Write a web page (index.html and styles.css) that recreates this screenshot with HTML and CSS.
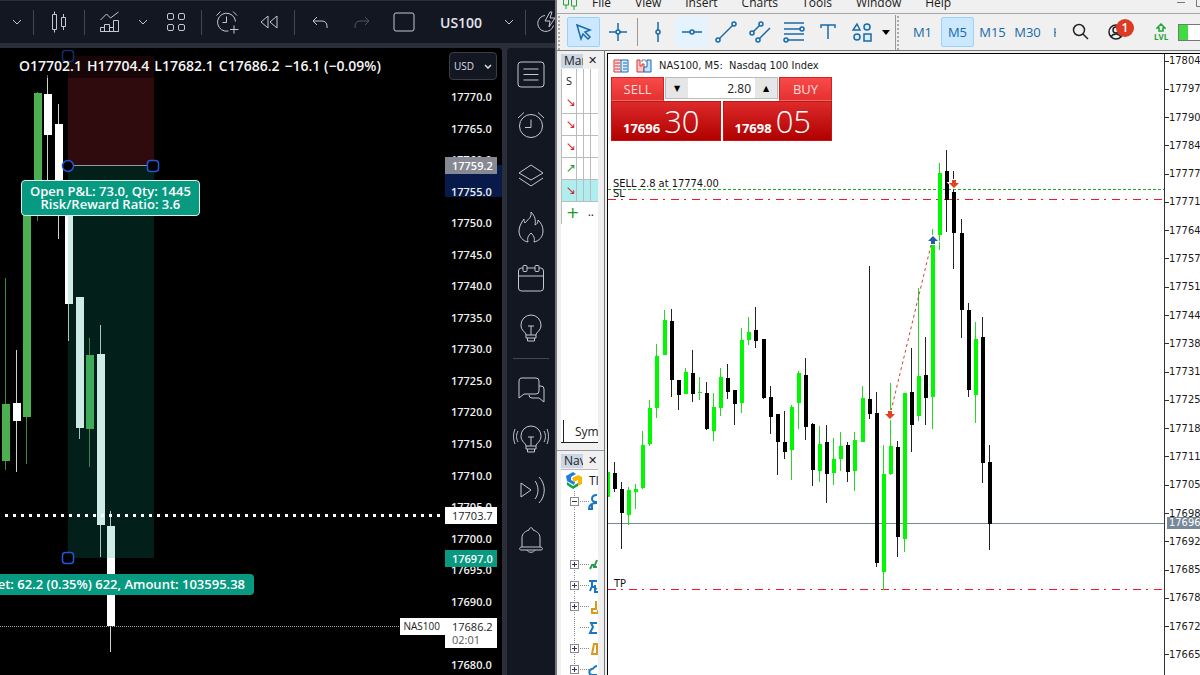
FILE: index.html
```html
<!DOCTYPE html>
<html lang="en">
<head>
  <meta charset="UTF-8">
  <meta name="viewport" content="width=device-width, initial-scale=1.0">
  <title>US100 / NAS100 - Trading desktop</title>
  <link rel="stylesheet" href="styles.css">
</head>
<body>
  <!-- Left: web chart -->
  <section class="tv">
    <header class="tv-toolbar">
      <button class="tv-chev" aria-label="Interval"><svg width="10" height="6" viewBox="0 0 10 6"><path d="M1 1l4 4 4-4"/></svg></button>
      <span class="tv-sep"></span>
      <button class="tv-tool" aria-label="Chart type"><svg width="18" height="24" viewBox="0 0 18 24"><path d="M2.500 4.500h4v15h-4zM4.500 1.500v3M4.500 19.500v3M11.500 7.500h4v9h-4zM13.500 4v3.500M13.500 16.500v3.500"/></svg></button>
      <span class="tv-sep"></span>
      <button class="tv-tool" aria-label="Indicators"><svg width="22" height="22" viewBox="0 0 22 22"><path d="M1.500 9l6-6 4 4 8-6M1.500 20.500v-4h4v4zM5.500 20.500v-7h5v7M10.500 20.500v-4h4v4M14.500 20.500v-11h5v11zM1.500 20.500h18"/></svg></button>
      <button class="tv-chev" aria-label="Favorite indicators"><svg width="10" height="6" viewBox="0 0 10 6"><path d="M1 1l4 4 4-4"/></svg></button>
      <button class="tv-tool" aria-label="Templates"><svg width="20" height="20" viewBox="0 0 20 20"><rect x="1.500" y="1.500" width="6" height="6" rx="1.500"/><rect x="12.500" y="1.500" width="6" height="6" rx="1.500"/><rect x="1.500" y="12.500" width="6" height="6" rx="1.500"/><rect x="12.500" y="12.500" width="6" height="6" rx="1.500"/></svg></button>
      <span class="tv-sep"></span>
      <button class="tv-tool" aria-label="Alert"><svg width="24" height="24" viewBox="0 0 24 24"><path d="M20.500 11.500a9 9 0 1 0-7 9.500M11.500 6.500v6h-4M1.500 5.500l4-4M18 1.500l4 4M19 15.500v8M15 19.500h8.500"/></svg></button>
      <button class="tv-tool" aria-label="Replay"><svg width="18" height="14" viewBox="0 0 18 14"><path d="M8 1v12L1 7zM17 1v12L10 7z"/></svg></button>
      <span class="tv-sep"></span>
      <button class="tv-tool" aria-label="Undo"><svg width="16" height="13" viewBox="0 0 16 13"><path d="M5 1L1 5l4 4M1 5h9c3 0 5 2 5 5v2"/></svg></button>
      <button class="tv-tool tv-dim" aria-label="Redo"><svg width="16" height="13" viewBox="0 0 16 13"><path d="M11 1l4 4-4 4M15 5H6c-3 0-5 2-5 5v2"/></svg></button>
      <button class="tv-tool" aria-label="Layout"><svg width="22" height="20" viewBox="0 0 22 20"><rect x="1" y="1" width="20" height="18" rx="2"/></svg></button>
      <button class="tv-name">US100</button>
      <button class="tv-chev" aria-label="Manage layouts"><svg width="10" height="6" viewBox="0 0 10 6"><path d="M1 1l4 4 4-4"/></svg></button>
      <span class="tv-sep"></span>
      <button class="tv-tool tv-flash" aria-label="Quick search"><svg width="24" height="22" viewBox="0 0 24 22"><path d="M9 4.500a8 8 0 1 0 8.500 10M14 1l-5 9h5l-1 6 6-9h-5l2-6z"/></svg></button>
    </header>

    <div class="tv-body">
      <main class="tv-chart">
        <div class="tv-plot">
          <svg class="canvas" id="tvCanvas" aria-hidden="true"></svg>
          <div class="tv-legend">
            <span>O17702.1</span><span>H17704.4</span><span>L17682.1</span><span>C17686.2</span><span>−16.1 (−0.09%)</span>
          </div>
          <div class="position-label">Open P&amp;L: 73.0, Qty: 1445<br>Risk/Reward Ratio: 3.6</div>
          <div class="target-label">Target: 62.2 (0.35%) 622, Amount: 103595.38</div>
        </div>
        <aside class="tv-axis">
          <select class="currency" aria-label="Currency"><option>USD</option></select>
          <div class="axis-range"></div>
          <ul class="tv-prices" id="tvPrices"></ul>
          <span class="tag tag-entry">17759.2</span>
          <span class="tag tag-line">17703.7</span>
          <span class="tag tag-target">17697.0</span>
          <span class="tag-symbol">NAS100</span>
          <span class="tag tag-last">17686.2<small>02:01</small></span>
        </aside>
      </main>

      <nav class="tv-rail">
        <div class="rail-top">
          <button aria-label="Watchlist"><svg width="28" height="28" viewBox="0 0 28 28"><rect x="1" y="2" width="26" height="25" rx="3"/><path d="M6.500 9h15M6.500 14.500h15M6.500 20h15"/></svg></button>
          <button aria-label="Alerts"><svg width="28" height="28" viewBox="0 0 28 28"><circle cx="14" cy="15" r="11.500"/><path d="M14 8.500V16.500H8M1 7l6-5.500M21 1.500L27 7"/></svg></button>
          <button aria-label="Object tree"><svg width="28" height="28" viewBox="0 0 28 28"><path d="M14 3l12 8-12 7-12-7zM2 16l12 8 12-8"/></svg></button>
          <button aria-label="Hotlists"><svg width="28" height="32" viewBox="0 0 28 32"><path d="M14 1c1 6-4 8-6 11-1-2-1-3-1-4-3 4-5 8-5 12 0 6 4 10 9 11-1-4 0-6 3-9 3 3 4 5 3 9 5-1 9-5 9-11 0-5-2-8-5-11 0 3-1 4-3 5 1-5 0-9-4-13z"/></svg></button>
          <button aria-label="Calendar"><svg width="28" height="28" viewBox="0 0 28 28"><rect x="1.500" y="4" width="25" height="23" rx="3"/><path d="M1.500 12h25"/><rect class="cut" x="6" y="1.500" width="4" height="6" rx="1"/><rect class="cut" x="18" y="1.500" width="4" height="6" rx="1"/></svg></button>
          <button aria-label="Ideas"><svg width="28" height="30" viewBox="0 0 28 30"><path d="M9 21c0-3-5-4-5-10a10 10 0 0 1 20 0c0 6-5 7-5 10zM9 21v3h10v-3M10.500 24v3h7v-3M11 12h6M14 12v9"/></svg></button>
        </div>
        <hr>
        <div class="rail-bottom">
          <button aria-label="Chats"><svg width="28" height="28" viewBox="0 0 28 28"><path d="M4 2h15a3 3 0 0 1 3 3v10a3 3 0 0 1-3 3H7l-5 4V5a3 3 0 0 1 2-3zM22 10h2a3 3 0 0 1 3 3v13l-5-4h-7a3 3 0 0 1-3-3"/></svg></button>
          <button aria-label="Ideas stream"><svg width="36" height="30" viewBox="0 0 36 30"><path d="M13 21c0-3-5-4-5-10a10 10 0 0 1 20 0c0 6-5 7-5 10zM13 21v3h10v-3M14.500 24v3h7v-3M15 12h6M18 12v9M5 6c-2 4-2 7 0 11M2 4c-2 5-2 10 0 15M31 6c2 4 2 7 0 11M34 4c2 5 2 10 0 15"/></svg></button>
          <button aria-label="Streams"><svg width="30" height="28" viewBox="0 0 30 28"><path d="M5 7v14l10-7zM19 5c4 5 4 13 0 18M23 1c7 7 7 19 0 26"/></svg></button>
          <button aria-label="Notifications"><svg width="28" height="28" viewBox="0 0 28 28"><path d="M5 21v-9c0-5 4-7 7-8 0-3 4-3 4 0 3 1 7 3 7 8v9M5 21h18c3 0 3 3 1 3H4c-2 0-2-3 1-3zM10 24c1 3 7 3 8 0"/></svg></button>
        </div>
      </nav>
    </div>
  </section>

  <!-- Right: desktop terminal -->
  <section class="mt">
    <nav class="mt-menu">
      <svg class="mt-logo" width="16" height="10" viewBox="0 0 16 10"><path d="M1.500 0v5h5V0M4 5v4M9.500 0v6h5V0M12 6v4"/></svg>
      <a href="#">File</a><a href="#">View</a><a href="#">Insert</a><a href="#">Charts</a><a href="#">Tools</a><a href="#">Window</a><a href="#">Help</a>
      <svg class="mt-window" width="24" height="8" viewBox="0 0 24 8"><path d="M1 2.500h8M20.500 0v6.500H26"/></svg>
    </nav>

    <div class="mt-toolbar">
      <span class="grip"></span>
      <div class="mt-tools">
        <button class="active" aria-label="Cursor"><svg width="20" height="20" viewBox="0 0 20 20"><path d="M3 3l13 5-5 2 5 5-2 2-5-5-2 5z"/></svg></button>
        <button aria-label="Crosshair"><svg width="20" height="20" viewBox="0 0 20 20"><path d="M10 1v7M10 12v7M1 10h7M12 10h7"/><circle cx="10" cy="10" r="2"/></svg></button>
        <span class="mt-sep"></span>
        <button aria-label="Vertical line"><svg width="20" height="20" viewBox="0 0 20 20"><path d="M10 0v8M10 12v8"/><circle cx="10" cy="10" r="2"/></svg></button>
        <button class="hover" aria-label="Horizontal line"><svg width="20" height="20" viewBox="0 0 20 20"><path d="M0 10h8M12 10h8"/><circle cx="10" cy="10" r="2"/></svg></button>
        <button aria-label="Trendline"><svg width="22" height="22" viewBox="0 0 22 22"><path d="M4 18L18 4"/><circle cx="3" cy="19" r="2"/><circle cx="19" cy="3" r="2"/></svg></button>
        <button aria-label="Channel"><svg width="22" height="22" viewBox="0 0 22 22"><path d="M4 11l7-7M9 19L21 7"/><circle cx="3" cy="12" r="2"/><circle cx="12" cy="3" r="2"/><circle cx="9" cy="19" r="2"/></svg></button>
        <button aria-label="Fibonacci"><svg width="22" height="22" viewBox="0 0 22 22"><path d="M1 2h20M1 8h16M1 13h20M5 19h16"/><circle cx="19" cy="8" r="2"/><circle cx="3" cy="19" r="2"/></svg></button>
        <button aria-label="Text"><svg width="18" height="18" viewBox="0 0 18 18"><path d="M2 5V2h14v3M9 2v14"/></svg></button>
        <button aria-label="Shapes"><svg width="20" height="20" viewBox="0 0 20 20"><path d="M5 2l3 6H1z"/><circle cx="15" cy="5" r="3"/><circle cx="5" cy="15" r="3"/><rect x="12" y="12" width="7" height="7"/></svg></button>
        <button class="narrow" aria-label="More shapes"><svg width="8" height="5" viewBox="0 0 8 5"><path class="solid" d="M0 0h8L4 5z"/></svg></button>
      </div>
      <span class="grip grip-line"></span>
      <div class="mt-periods">
        <button>M1</button><button class="active">M5</button><button>M15</button><button>M30</button><button class="cropped">H1</button>
      </div>
      <div class="mt-right">
        <button aria-label="Search"><svg width="18" height="18" viewBox="0 0 18 18"><circle cx="7" cy="7" r="5.500"/><path d="M11 11l5 5"/></svg></button>
        <button class="account" aria-label="Account"><svg width="16" height="16" viewBox="0 0 16 16"><circle cx="8" cy="8" r="7"/><circle cx="8" cy="6" r="3"/><path d="M3 13c2-4 8-4 10 0"/></svg><span class="badge">1</span></button>
        <button class="level" aria-label="LVL"><svg width="10" height="9" viewBox="0 0 10 9"><path d="M5 1l4 4H7v3H3V5H1z"/></svg><span>LVL</span></button>
        <span class="battery"></span>
      </div>
    </div>

    <div class="mt-body">
      <aside class="dock">
        <section class="watch">
          <h2><span>Market Watch</span><button aria-label="Close Market Watch">✕</button></h2>
          <table>
            <thead><tr><th>S</th><th></th><th></th><th></th></tr></thead>
            <tbody>
              <tr><td class="down">↘</td><td></td><td></td><td></td></tr>
              <tr><td class="down">↘</td><td></td><td></td><td></td></tr>
              <tr><td class="down">↘</td><td></td><td></td><td></td></tr>
              <tr><td class="up">↗</td><td></td><td></td><td></td></tr>
              <tr class="selected"><td class="down">↘</td><td></td><td></td><td></td></tr>
            </tbody>
          </table>
          <div class="add-row"><button aria-label="Add symbol">+</button><span>..</span></div>
          <div class="watch-tab">Symbols</div>
        </section>
        <section class="navigator">
          <h2><span>Navigator</span><button aria-label="Close Navigator">✕</button></h2>
          <ul class="tree">
            <li class="root"><svg width="16" height="17" viewBox="0 0 16 17"><path fill="#1a7fe0" d="M0 4l7-4 3 2-5 3v3l4 2-1 3-7-4z"/><path fill="#f6b800" d="M6 6l6-3 4 2v7l-4 2V8l-4 2z"/><path fill="#12a34a" d="M1 10l6 4 5-3v3l-5 3-6-4z"/></svg><span>TI</span></li>
            <li><i class="box minus"></i><svg width="10" height="16" viewBox="0 0 10 16"><path d="M9 1C5 1 4 3 4 5s2 3 5 3M9 9c-6 0-8 3-8 6h3v-4"/></svg></li>
            <li class="empty"></li>
            <li class="empty"></li>
            <li><i class="box"></i><svg class="green" width="10" height="16" viewBox="0 0 10 16"><path d="M2 12l2-4h3l2-5M5 10h4"/></svg></li>
            <li><i class="box"></i><svg width="10" height="16" viewBox="0 0 10 16"><path d="M1 3h8M4 3v5l-2 5M7 7v7h3M4 8l5 3"/></svg></li>
            <li><i class="box"></i><svg class="gold" width="10" height="16" viewBox="0 0 10 16"><path d="M8 2v8H4v4h6v-3"/></svg></li>
            <li><i class="stub"></i><svg width="10" height="16" viewBox="0 0 10 16"><path d="M9 3H3l2 4-3 6h7"/></svg></li>
            <li><i class="box"></i><svg class="gold" width="10" height="16" viewBox="0 0 10 16"><path d="M9 3H6L4 13h5z"/></svg></li>
            <li><i class="box"></i><svg width="10" height="16" viewBox="0 0 10 16"><path d="M9 4C6 4 6 7 4 7c-4 1-3 6 0 6h5"/></svg></li>
          </ul>
        </section>
      </aside>

      <main class="mt-chart">
        <div class="mt-plot">
          <svg class="canvas" id="mtCanvas" aria-hidden="true"></svg>
          <div class="mt-title">
            <svg width="16" height="14" viewBox="0 0 16 14"><path fill="#fbe3e3" stroke="#d8322f" d="M8 1H1v12h7M2 4h5M2 7h5M2 10h5"/><path fill="#dceeff" stroke="#1667b7" d="M8 1h7v12H8zM10 4h4M10 7h4M10 10h4"/></svg>
            <svg width="16" height="14" viewBox="0 0 16 14"><path fill="#f9c9c9" stroke="#d8322f" d="M1 1h3v6h2V5h2v8H1z"/><path fill="#c9e4ff" stroke="#1667b7" d="M8 13V8h3V1h4v12z"/><path fill="none" stroke="#888" d="M6 3V1h4v2"/></svg>
            <span>NAS100, M5:&nbsp; Nasdaq 100 Index</span>
          </div>
          <form class="one-click">
            <div class="deal-row">
              <button type="button" class="deal">SELL</button>
              <div class="volume">
                <button type="button" aria-label="Volume down">▼</button>
                <input type="text" value="2.80" aria-label="Volume">
                <button type="button" aria-label="Volume up">▲</button>
              </div>
              <button type="button" class="deal">BUY</button>
            </div>
            <div class="price-row">
              <button type="button"><b>17696</b><span>30</span></button>
              <button type="button"><b>17698</b><span>05</span></button>
            </div>
          </form>
        </div>
        <aside class="mt-axis">
          <ul id="mtPrices"></ul>
          <span class="mt-bid">17696</span>
        </aside>
      </main>
    </div>
  </section>

  <script src="chart.js"></script>
</body>
</html>
```
FILE: styles.css
```css
* {
  box-sizing: border-box;
}

body {
  margin: 0;
  height: 100vh;
  display: flex;
  overflow: hidden;
  background: #f0f0f0;
  font-family: "Open Sans", "Noto Sans", sans-serif;
}

button {
  border: none;
  background: none;
  padding: 0;
  margin: 0;
  color: inherit;
  font: inherit;
  cursor: pointer;
}

ul {
  list-style: none;
  margin: 0;
  padding: 0;
}

svg {
  display: block;
  flex: none;
}

.canvas {
  position: absolute;
  inset: 0;
  width: 100%;
  height: 100%;
}

/* ---------- left: web chart ---------- */
.tv {
  flex: 0 0 557px;
  min-width: 0;
  display: flex;
  flex-direction: column;
  background: #2a2e39;
  border-right: 2px solid #77787c;
  overflow: hidden;
}

.tv svg {
  fill: none;
  stroke: #c5c8d0;
}

.tv-toolbar {
  height: 43px;
  flex: none;
  display: flex;
  align-items: center;
  gap: 2px;
  padding-left: 6px;
  border-top: 1px solid #2a2e39;
  background: #131722;
  overflow: hidden;
}

.tv-toolbar button {
  flex: none;
  height: 36px;
  display: flex;
  align-items: center;
  justify-content: center;
}

.tv-toolbar .tv-tool {
  width: 40px;
}

.tv-toolbar .tv-flash {
  width: 34px;
}

.tv-toolbar .tv-chev {
  width: 22px;
}

.tv-toolbar .tv-name {
  padding: 0 14px;
  color: #e4e6ec;
  font-size: 14px;
  font-weight: 600;
}

.tv-dim {
  opacity: 0.35;
}

.tv-sep {
  flex: none;
  width: 1px;
  height: 25px;
  margin: 0 3px;
  background: #434651;
}

.tv-body {
  flex: 1;
  min-height: 0;
  display: flex;
  gap: 5px;
  padding-top: 5px;
}

.tv-chart {
  flex: 1;
  min-width: 0;
  display: flex;
  background: #000;
  border-top-right-radius: 4px;
}

.tv-plot {
  position: relative;
  flex: 1;
  min-width: 0;
  overflow: hidden;
}

.tv-legend {
  position: relative;
  display: flex;
  gap: 5px;
  padding: 8px 0 3px 19px;
  color: #f5f5f5;
  background: rgba(0, 0, 0, 0.5);
  font-size: 14px;
  font-weight: 600;
  line-height: 19px;
  white-space: nowrap;
}

.position-label,
.target-label {
  position: absolute;
  background: #089981;
  color: #fff;
  font-size: 13px;
  font-weight: 600;
  text-align: center;
  white-space: nowrap;
  border-radius: 4px;
}

.position-label {
  left: 21px;
  top: 132px;
  padding: 4px 8px;
  border: 1px solid #d6efe9;
  line-height: 13px;
}

.target-label {
  right: 190px;
  top: 526px;
  padding: 0 9px;
  line-height: 21px;
}

.tv-axis {
  position: relative;
  flex: none;
  width: 58px;
  display: flex;
  flex-direction: column;
  color: #f0f0f0;
  font-size: 11px;
  font-weight: 600;
}

.currency {
  width: 48px;
  height: 28px;
  margin: 4px 0 9px 5px;
  padding: 0 4px;
  appearance: none;
  border: 1px solid #3a3d48;
  border-radius: 4px;
  background: #131722 url("data:image/svg+xml,%3Csvg xmlns='http://www.w3.org/2000/svg' width='8' height='5'%3E%3Cpath d='M1 1l3 3 3-3' fill='none' stroke='%23ddd' stroke-width='1.500'/%3E%3C/svg%3E") no-repeat right 4px center;
  color: #dcdee4;
  font-family: inherit;
  font-size: 10px;
}

.axis-range {
  position: absolute;
  top: 117px;
  left: 1px;
  right: 0;
  height: 32px;
  background: #071a4a;
}

.tv-prices {
  position: relative;
  flex: 1;
  display: flex;
  flex-direction: column;
  justify-content: space-between;
  margin-bottom: 2px;
  padding-left: 7px;
  line-height: 16px;
}

.tag {
  position: absolute;
  left: 1px;
  width: 52px;
  padding-left: 7px;
  line-height: 17px;
}

.tag-entry {
  top: 109px;
  background: #868993;
  color: #fff;
}

.tag-line {
  top: 459px;
}

.tag-target {
  top: 502px;
  background: #089981;
  color: #fff;
}

.tag-last {
  top: 570px;
}

.tag-line,
.tag-last,
.tag-symbol {
  background: #fff;
  color: #222;
  font-weight: 400;
}

.tag-last small {
  display: block;
  padding-bottom: 3px;
  color: #555;
  font-size: 11px;
  line-height: 10px;
}

.tag-symbol {
  position: absolute;
  top: 570px;
  right: 57px;
  padding: 0 5px 0 4px;
  font-size: 10px;
  line-height: 17px;
}

.tv-rail {
  flex: none;
  width: 48px;
  background: #131722;
  border-top-left-radius: 4px;
}

.tv-rail button {
  width: 100%;
  height: 51px;
  display: flex;
  align-items: center;
  justify-content: center;
}

.tv-rail .rail-bottom button {
  height: 50px;
}

.tv-rail hr {
  margin: 4px 6px 6px;
  border: none;
  border-top: 1px solid #434651;
}

.tv-rail .cut {
  fill: #131722;
}

/* ---------- right: terminal ---------- */
.mt {
  flex: 1;
  min-width: 0;
  display: flex;
  flex-direction: column;
  background: #f0f0f0;
  color: #1a1a1a;
}

.mt-menu {
  height: 14px;
  flex: none;
  display: flex;
  align-items: flex-start;
  gap: 24px;
  padding-left: 5px;
  border-bottom: 1px solid #a6a6a6;
  overflow: hidden;
}

.mt-menu a {
  color: #1a1a1a;
  font-size: 12px;
  line-height: 6px;
  text-decoration: none;
}

.mt-logo {
  margin-right: -10px;
  fill: none;
  stroke: #22a33a;
}

.mt-window {
  margin-left: auto;
  fill: none;
  stroke: #777;
}

.mt-toolbar {
  height: 37px;
  flex: none;
  display: flex;
  align-items: center;
  border-bottom: 1px solid #777;
  overflow: hidden;
}

.mt-toolbar svg {
  fill: none;
  stroke: #1769aa;
  stroke-width: 1.5;
}

.mt-toolbar svg circle,
.mt-toolbar svg rect {
  fill: #d9effc;
}

.mt-toolbar svg .solid {
  fill: #000;
  stroke: none;
}

.grip {
  width: 5px;
  height: 35px;
  flex: none;
  margin-right: 5px;
  background: radial-gradient(circle, #aaa 1px, transparent 1px) 0 0 / 4px 4px;
}

.grip-line {
  margin-left: 3px;
  border-left: 1px solid #999;
}

.mt-tools {
  flex: none;
  display: flex;
  align-items: center;
  gap: 1px;
}

.mt-tools button,
.mt-periods button {
  width: 33px;
  height: 30px;
  display: flex;
  align-items: center;
  justify-content: center;
  border: 1px solid transparent;
}

.mt-tools .narrow {
  width: 13px;
}

.mt-toolbar .active {
  background: #cce8ff;
  border: 1px solid #99d1ff;
  border-radius: 2px;
}

.mt-toolbar .hover {
  background: #e5f3ff;
}

.mt-sep {
  width: 1px;
  height: 28px;
  margin: 0 2px;
  background: #999;
}

.mt-periods {
  flex: none;
  display: flex;
  gap: 2px;
  padding-left: 1px;
  color: #1769aa;
  font-size: 13px;
}

.mt-periods .cropped {
  width: 5px;
  margin-left: 6px;
  justify-content: flex-start;
  overflow: hidden;
}

.mt-right {
  flex: 1;
  min-width: 0;
  display: flex;
  align-items: center;
  gap: 18px;
  padding-left: 15px;
}

.mt-right button svg {
  stroke: #222;
}

.mt-right .account svg circle {
  fill: none;
}

.mt-right button:first-child circle {
  fill: none;
}

.account {
  position: relative;
}

.badge {
  position: absolute;
  left: 8px;
  top: -5px;
  width: 18px;
  border-radius: 50%;
  background: #dc3a22;
  color: #fff;
  font-size: 12px;
  font-weight: 600;
  line-height: 18px;
}

.level {
  display: flex;
  flex-direction: column;
  align-items: center;
  margin-left: 12px;
  color: #1fa33a;
  font-size: 8px;
  font-weight: 700;
  line-height: 9px;
}

.mt-right .level svg {
  stroke: #1fa33a;
}

.battery {
  flex: none;
  width: 34px;
  height: 17px;
  margin-left: -8px;
  border: 1px solid #777;
  background: linear-gradient(90deg, #3fdc3f 9px, #fff 9px);
}

.mt-body {
  flex: 1;
  min-height: 0;
  display: flex;
}

.dock {
  flex: none;
  width: 48px;
  display: flex;
  flex-direction: column;
  border-right: 1px solid #777;
}

.dock h2 {
  display: flex;
  justify-content: space-between;
  align-items: center;
  height: 17px;
  margin: 0;
  font-size: 12px;
  font-weight: 400;
}

.dock h2 span {
  width: 22px;
  height: 14px;
  padding-left: 3px;
  background: #cbd6e4;
  line-height: 14px;
  white-space: nowrap;
  overflow: hidden;
}

.dock h2 button {
  width: 11px;
  font-family: "DejaVu Sans", sans-serif;
  font-size: 11px;
}

.watch {
  height: 400px;
  flex: none;
  display: flex;
  flex-direction: column;
  padding: 1px 6px 7px 4px;
  border-bottom: 1px solid #999;
}

.watch table {
  width: 37px;
  table-layout: fixed;
  border-collapse: collapse;
  background: #fff;
}

.watch tr {
  height: 22px;
}

.watch th {
  font-size: 11px;
  font-weight: 400;
  overflow: hidden;
}

.watch th,
.watch td {
  padding: 0;
  border-left: 1px solid #bbb;
}

.watch td {
  border-bottom: 1px solid #bbb;
}

.watch th:first-child {
  width: 15px;
}

.watch td:first-child {
  text-align: right;
  font-family: "DejaVu Sans", sans-serif;
  font-size: 12px;
  line-height: 12px;
}

.down {
  color: #d8242f;
}

.up {
  color: #179a2d;
}

.watch .selected {
  background: #aeeeee;
}

.add-row {
  display: flex;
  justify-content: space-between;
  height: 22px;
  padding: 0 4px;
  background: #fff;
  border-left: 1px solid #bbb;
  font-size: 12px;
  line-height: 20px;
}

.add-row button {
  color: #179a2d;
  font-family: "DejaVu Sans", sans-serif;
  font-size: 16px;
  line-height: 18px;
}

.watch-tab {
  flex: 1;
  display: flex;
  align-items: flex-end;
  padding-left: 14px;
  background: linear-gradient(#222, #222) 2px 100% / 1px 22px no-repeat, #fff;
  border-bottom: 1px solid #222;
  font-size: 12px;
  line-height: 20px;
  overflow: hidden;
}

.navigator {
  flex: 1;
  min-height: 0;
  display: flex;
  flex-direction: column;
  padding: 1px 6px 0 4px;
}

.tree {
  flex: 1;
  min-height: 0;
  padding-left: 5px;
  background: #fff;
  border-top: 1px solid #bbb;
  overflow: hidden;
}

.tree li {
  display: flex;
  align-items: center;
  gap: 9px;
  height: 21px;
  font-size: 12px;
  background:
    repeating-linear-gradient(#888 0 1px, transparent 1px 2px) 8px 0 / 1px 20px no-repeat,
    repeating-linear-gradient(90deg, #888 0 1px, transparent 1px 2px) 14px 10px / 9px 1px no-repeat;
}

.tree .root {
  gap: 7px;
  background: none;
}

.tree .empty {
  background: repeating-linear-gradient(#888 0 1px, transparent 1px 2px) 8px 0 / 1px 20px no-repeat;
}

.tree li svg {
  fill: none;
  stroke: #1976c5;
  stroke-width: 2;
}

.tree .root svg {
  stroke: none;
}

.tree li .green {
  stroke: #2a9c4a;
}

.tree li .gold {
  stroke: #d79a1c;
}

.box {
  flex: none;
  width: 9px;
  height: 9px;
  margin-left: 4px;
  border: 1px solid #8a8a8a;
  background: linear-gradient(#335, #335) center / 5px 1px no-repeat, linear-gradient(#335, #335) center / 1px 5px no-repeat, #fff;
}

.box.minus {
  background: linear-gradient(#335, #335) center / 5px 1px no-repeat, #fff;
}

.stub {
  flex: none;
  width: 5px;
  margin-left: 8px;
}

/* chart window */
.mt-chart {
  flex: 1;
  min-width: 0;
  display: flex;
  margin: 2px 0 0 2px;
  border-top: 1px solid #000;
  border-left: 1px solid #000;
  background: #fff;
}

.mt-plot {
  position: relative;
  flex: 1;
  min-width: 0;
  overflow: hidden;
}

.mt-plot text,
.mt-title,
.mt-axis {
  font-family: "DejaVu Sans Condensed", "Noto Sans", sans-serif;
  font-size: 11px;
}

.mt-title {
  position: relative;
  display: flex;
  align-items: center;
  gap: 7px;
  height: 23px;
  padding-left: 5px;
}

.one-click {
  position: relative;
  width: 221px;
  margin: 0 0 0 3px;
  color: #ffdcdc;
}

.deal-row,
.price-row {
  display: flex;
}

.deal-row {
  height: 24px;
}

.deal {
  flex: none;
  width: 53px;
  background: linear-gradient(#f84a4a, #e43131);
  border: 1px solid #d92020;
  border-bottom-color: #f06a6a;
  font-size: 13px;
}

.volume {
  flex: 1;
  min-width: 0;
  display: flex;
  height: 22px;
  margin: 0 1px;
  border: 1px solid #bbb;
  background: #fff;
}

.volume button {
  flex: none;
  width: 22px;
  background: #e6e6e6;
  color: #000;
  font-family: "DejaVu Sans", sans-serif;
  font-size: 8px;
}

.volume input {
  flex: 1;
  min-width: 0;
  padding: 0 4px;
  border: none;
  color: #222;
  font-family: "Open Sans", sans-serif;
  font-size: 12px;
  text-align: right;
}

.price-row {
  gap: 2px;
}

.price-row button {
  flex: 1;
  display: flex;
  align-items: flex-end;
  gap: 4px;
  height: 40px;
  padding: 0 0 5px 11px;
  background: linear-gradient(#dd2a2a, #b00000);
  border: 1px solid #c91414;
  color: #fff;
}

.price-row b {
  font-size: 13px;
  line-height: 14px;
}

.price-row span {
  font-size: 31px;
  line-height: 27px;
  font-weight: 300;
}

.mt-axis {
  position: relative;
  flex: none;
  width: 36px;
  display: flex;
  border-left: 1px solid #333;
  overflow: hidden;
}

.mt-axis ul {
  display: flex;
  flex-direction: column;
  justify-content: space-between;
  margin-bottom: 13px;
}

.mt-axis li {
  display: flex;
  align-items: center;
  line-height: 14px;
}

.mt-axis li::before {
  content: "";
  width: 4px;
  height: 1px;
  background: #333;
}

.mt-bid {
  position: absolute;
  left: 2px;
  right: 0;
  top: 463px;
  padding-left: 2px;
  background: #778899;
  color: #fff;
  line-height: 12px;
}
```
FILE: chart.js
```javascript
const NS = 'http://www.w3.org/2000/svg';

function add(parent, tag, attrs, text) {
  const el = document.createElementNS(NS, tag);
  for (const key in attrs) el.setAttribute(key, attrs[key]);
  if (text) el.textContent = text;
  parent.appendChild(el);
  return el;
}

function line(parent, x1, y1, x2, y2, stroke, extra) {
  add(parent, 'line', Object.assign({ x1, y1, x2, y2, stroke }, extra));
}

function fillPrices(id, prices) {
  const list = document.getElementById(id);
  for (const price of prices) {
    const li = document.createElement('li');
    li.textContent = price;
    list.appendChild(li);
  }
}

// candle: [colour, high, body top, body bottom, low]
function drawCandles(parent, candles, startX, step, width, colours) {
  candles.forEach(([c, high, top, bottom, low], i) => {
    const x = Math.round(startX + step * i);
    add(parent, 'rect', { x: x - 1, y: high, width: 1, height: low - high, fill: colours[c].wick, stroke: 'none' });
    add(parent, 'rect', { x: x - width / 2, y: top, width, height: bottom - top, fill: colours[c].body, stroke: 'none' });
  });
}

// ---- web chart ----
const tvPrices = [];
for (let p = 17770; p >= 17680; p -= 5) tvPrices.push(p.toFixed(1));
fillPrices('tvPrices', tvPrices);

const tv = add(document.getElementById('tvCanvas'), 'g', { transform: 'translate(0 -48)' });
drawCandles(tv, [
  ['g', 278, 404, 461, 470],
  ['w', 350, 403, 421, 472],
  ['g', 200, 200, 417, 464],
  ['g', 92, 93, 200, 221],
  ['w', 75, 94, 135, 200],
  ['w', 104, 124, 200, 239],
  ['w', 200, 200, 304, 341],
  ['w', 297, 297, 428, 439],
  ['g', 338, 355, 429, 467],
  ['w', 325, 354, 525, 557],
  ['w', 511, 526, 626, 652]
], 6, 10.5, 8, {
  g: { body: '#4caf50', wick: '#3c8a40' },
  w: { body: '#ffffff', wick: '#d0d0d0' }
});
add(tv, 'rect', { x: 68, y: 56, width: 86, height: 109, fill: '#f23645', 'fill-opacity': 0.2, stroke: 'none' });
add(tv, 'rect', { x: 68, y: 166, width: 86, height: 392, fill: '#089981', 'fill-opacity': 0.2, stroke: 'none' });
line(tv, 68, 165.5, 153, 165.5, '#9598a1');
line(tv, 5, 515.5, 2000, 515.5, '#fff', { 'stroke-width': 3, 'stroke-dasharray': '3 5' });
line(tv, 0, 626.5, 2000, 626.5, '#999', { 'stroke-dasharray': '1 1' });
for (const [x, y, rx] of [[68, 56, 3], [153, 166, 3], [68, 558, 3], [68, 166, 6]]) {
  add(tv, 'rect', { x: x - 5.5, y: y - 5.5, width: 11, height: 11, rx, fill: '#000', stroke: '#2457d6', 'stroke-width': 1.5 });
}

// ---- terminal chart ----
fillPrices('mtPrices', [
  17804, 17797, 17790, 17784, 17777, 17771, 17764, 17757, 17751, 17744, 17738,
  17731, 17725, 17718, 17711, 17705, 17698, 17692, 17685, 17678, 17672, 17665
]);

const mt = add(document.getElementById('mtCanvas'), 'g', { transform: 'translate(-608 -54)' });
line(mt, 608, 189.5, 2000, 189.5, '#22a822', { 'stroke-dasharray': '3 2' });
line(mt, 608, 199.5, 2000, 199.5, '#f5142a', { 'stroke-dasharray': '8 5 2 6' });
line(mt, 608, 523.5, 2000, 523.5, '#778899');
line(mt, 608, 589.5, 2000, 589.5, '#f5142a', { 'stroke-dasharray': '8 5 2 6' });
drawCandles(mt, [
  ['g', 472, 472, 497, 497],
  ['k', 462, 473, 489, 492],
  ['k', 482, 489, 513, 549],
  ['g', 487, 490, 515, 525],
  ['g', 484, 489, 492, 509],
  ['g', 431, 445, 488, 489],
  ['g', 400, 408, 444, 446],
  ['g', 344, 356, 408, 418],
  ['g', 310, 320, 355, 355],
  ['k', 309, 321, 380, 397],
  ['k', 380, 380, 395, 410],
  ['g', 368, 372, 394, 394],
  ['k', 350, 373, 394, 402],
  ['g', 377, 392, 393, 400],
  ['k', 382, 393, 429, 430],
  ['g', 393, 407, 431, 441],
  ['g', 368, 377, 408, 416],
  ['k', 364, 378, 392, 399],
  ['k', 390, 390, 404, 425],
  ['g', 328, 340, 403, 413],
  ['g', 317, 332, 340, 345],
  ['k', 307, 330, 341, 348],
  ['k', 339, 339, 398, 399],
  ['k', 386, 397, 417, 434],
  ['k', 414, 414, 442, 475],
  ['k', 411, 442, 452, 459],
  ['g', 405, 407, 450, 480],
  ['g', 371, 373, 403, 429],
  ['k', 358, 375, 427, 440],
  ['k', 423, 424, 470, 486],
  ['g', 426, 444, 471, 482],
  ['k', 425, 442, 474, 503],
  ['g', 438, 459, 473, 485],
  ['g', 432, 446, 459, 471],
  ['k', 442, 445, 472, 482],
  ['g', 432, 440, 471, 491],
  ['g', 386, 398, 442, 442],
  ['k', 266, 399, 414, 419],
  ['k', 392, 413, 563, 567],
  ['g', 445, 474, 572, 590],
  ['g', 383, 446, 474, 475],
  ['k', 441, 447, 537, 557],
  ['g', 393, 393, 539, 552],
  ['k', 348, 392, 425, 452],
  ['g', 288, 376, 416, 421],
  ['k', 337, 375, 398, 425],
  ['g', 229, 244, 397, 429],
  ['g', 163, 173, 235, 250],
  ['k', 150, 171, 200, 232],
  ['k', 171, 192, 233, 269],
  ['k', 219, 233, 310, 338],
  ['k', 303, 310, 390, 397],
  ['g', 322, 339, 395, 423],
  ['k', 317, 337, 463, 483],
  ['k', 445, 462, 524, 550]
], 608, 7.07, 4, {
  g: { body: '#00f800', wick: '#25d825' },
  k: { body: '#000000', wick: '#222222' }
});
line(mt, 891, 411, 931, 245, '#d0452c', { 'stroke-dasharray': '3 3' });

const down = 'M-2 -4h4v3h3l-5 5-5-5h3z';
const up = 'M-2 4h4v-3h3l-5-5-5 5h3z';
for (const [x, y, d, fill] of [[890, 415, down, '#e04420'], [954, 184, down, '#e04420'], [933, 240, up, '#1d5ca8']]) {
  add(mt, 'path', { transform: `translate(${x} ${y})`, d, fill, stroke: '#fff', 'stroke-width': 2, 'paint-order': 'stroke' });
}
add(mt, 'text', { x: 613, y: 187, fill: '#111' }, 'SELL 2.8 at 17774.00');
add(mt, 'text', { x: 613, y: 197, fill: '#111' }, 'SL');
add(mt, 'text', { x: 614, y: 587, fill: '#111' }, 'TP');
```
